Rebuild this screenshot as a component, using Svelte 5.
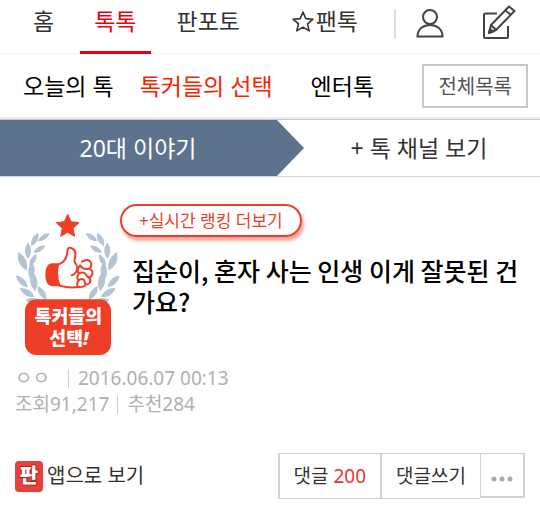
<script lang="ts">
	const tabs = [
		{ label: '홈', active: false, star: false },
		{ label: '톡톡', active: true, star: false },
		{ label: '판포토', active: false, star: false },
		{ label: '팬톡', active: false, star: true },
	];

	const sections = [
		{ label: '오늘의 톡', active: false },
		{ label: '톡커들의 선택', active: true },
		{ label: '엔터톡', active: false },
	];

	const post = {
		title: '집순이, 혼자 사는 인생 이게 잘못된 건가요?',
		author: 'ㅇㅇ',
		date: '2016.06.07 00:13',
		views: '91,217',
		likes: '284',
		comments: 200,
	};

	// each leaf runs from its base to its tip: x1, y1, x2, y2
	const leaves = [
		[116, 152, 147, 131],
		[95, 167, 114, 130],
		[102, 187, 134, 168],
		[84, 205, 84, 159],
		[90, 227, 108, 194],
		[79, 240, 56, 188],
		[93, 268, 96, 218],
		[82, 290, 49, 258],
		[105, 302, 98, 248],
		[102, 320, 61, 296],
		[138, 328, 114, 290],
		[122, 336, 79, 330],
	];

	// control points sit off the midpoint, at right angles to the leaf
	function leafPath([x1, y1, x2, y2]: number[]) {
		const mx = (x1 + x2) / 2;
		const my = (y1 + y2) / 2;
		const dx = (y2 - y1) * 0.34;
		const dy = (x2 - x1) * 0.34;
		return `M${x1} ${y1}Q${mx + dx} ${my - dy} ${x2} ${y2}Q${mx - dx} ${my + dy} ${x1} ${y1}Z`;
	}
</script>

<header class="top">
	<nav class="tabs">
		{#each tabs as tab}
			<a href="#top" class="tab" class:active={tab.active} class:last={tab.star}>
				{#if tab.star}
					<svg width="22" height="22" viewBox="0 0 22 22" fill="none" stroke="#333" stroke-width="1.6" stroke-linejoin="round" aria-hidden="true">
						<path d="M11 1l2.800 6.600 7.200.6-5.500 4.700 1.700 7-6.200-3.800-6.200 3.800 1.700-7L1 8.200l7.200-.6z" />
					</svg>
				{/if}
				{tab.label}
			</a>
		{/each}
	</nav>
	<div class="tools">
		<button aria-label="내 정보">
			<svg width="28" height="30" viewBox="0 0 28 30" fill="none" stroke="#444" stroke-width="2" aria-hidden="true">
				<circle cx="14" cy="8" r="7" />
				<path d="M1.500 27.500C1.500 12 26.500 12 26.500 27.500Z" />
			</svg>
		</button>
		<button aria-label="글쓰기">
			<svg width="34" height="36" viewBox="0 0 34 36" fill="none" stroke="#444" stroke-width="2" stroke-linejoin="round" aria-hidden="true">
				<path d="M15 9.500H3.500Q2 9.500 2 11V32.500Q2 34 3.500 34H24.500Q26 34 26 32.500V22" />
				<path d="M27 2.500L32.500 7 14 26 7 29 9 21Z" />
				<path d="M23.500 6.500L29 11M9 21L14 26" />
				<path d="M7 29l1-4 3 2.500z" fill="#444" />
			</svg>
		</button>
	</div>
</header>

<nav class="sections">
	{#each sections as section}
		<a href="#section" class:active={section.active}>{section.label}</a>
	{/each}
	<button class="all">전체목록</button>
</nav>

<nav class="category">
	<a href="#category" class="current">20대 이야기</a>
	<a href="#channels" class="channels">+ 톡 채널 보기</a>
</nav>

<article class="post">
	<div class="head">
		<svg class="badge" width="108" height="148" viewBox="36 60 324 444" role="img" aria-label="톡커들의 선택!">
			<g fill="#b5c4d3" stroke="#b5c4d3" stroke-width="3" stroke-linejoin="round">
				{#each leaves as leaf}
					<path d={leafPath(leaf)} />
				{/each}
				<g transform="translate(406 0) scale(-1 1)">
					{#each leaves as leaf}
						<path d={leafPath(leaf)} />
					{/each}
				</g>
			</g>
			<path d="M203 73l10 22 24 3-18 17 5 24-21-12-21 12 5-24-18-17 24-3z" fill="#ee3e27" stroke="#ee3e27" stroke-width="3" stroke-linejoin="round" />
			<path d="M190 220h-36q-18 4-18 34 0 32 20 35h34z" fill="#ee3e27" />
			<g fill="#fff" stroke="#ee3e27" stroke-width="6" stroke-linecap="round" stroke-linejoin="round">
				<path d="M178 222Q200 211 202 184Q203 171 214 174Q232 181 225 208L240 228L268 238L260 284L238 290Q210 298 182 288Q168 254 178 222Z" stroke="none" />
				<path d="M178 222Q200 213 202 186Q202 171 213 174Q232 180 224 207Q222 214 226 219Q236 233 228 246Q223 254 215 256" fill="none" />
				<path d="M180 287Q208 295 234 291" fill="none" />
				<path d="M246 215Q266 203 273 219Q276 231 268 236Q281 242 276 255Q273 262 267 263Q275 271 269 279Q265 284 257 283Q252 293 234 291" />
				<path d="M240 226Q248 240 268 236M240 226Q228 244 237 250Q249 244 256 251Q260 258 267 263M237 250Q226 265 237 270Q248 264 253 271Q254 278 257 283M237 270Q228 280 234 291" fill="none" />
			</g>
			<rect x="75" y="328" width="258" height="167" rx="34" fill="#ee3e27" />
			<g class="badge-text" fill="#fff" text-anchor="middle">
				<text x="205" y="399">톡커들의</text>
				<text x="207" y="465">선택<tspan font-style="italic">!</tspan></text>
			</g>
		</svg>
		<div class="heading">
			<a href="#ranking" class="ranking">+실시간 랭킹 더보기</a>
			<h1>{post.title}</h1>
		</div>
	</div>

	<div class="meta">
		<p><span class="author">{post.author}</span><span class="bar">{post.date}</span></p>
		<p><span>조회{post.views}</span><span class="bar">추천{post.likes}</span></p>
	</div>

	<div class="actions">
		<a href="#app" class="app">
			<svg width="28" height="31" viewBox="0 0 28 31" aria-hidden="true">
				<rect width="28" height="31" rx="4" fill="#e8403a" />
				<text x="14" y="22" text-anchor="middle" class="logo">판</text>
			</svg>
			<span>앱으로 보기</span>
		</a>
		<div class="buttons">
			<button>댓글 <span class="count">{post.comments}</span></button>
			<button>댓글쓰기</button>
			<button class="more" aria-label="더보기">
				<svg width="22" height="6" viewBox="0 0 22 6" fill="#aaa" aria-hidden="true">
					<circle cx="3" cy="3" r="2.500" /><circle cx="11" cy="3" r="2.500" /><circle cx="19" cy="3" r="2.500" />
				</svg>
			</button>
		</div>
	</div>
</article>

<style>
	:global(body) {
		margin: 0;
		background: #fff;
		color: #333;
		font-family: 'Noto Sans', 'Noto Sans CJK KR', sans-serif;
		font-size: 23px;
	}

	a {
		color: inherit;
		text-decoration: none;
		white-space: nowrap;
	}

	button {
		margin: 0;
		padding: 0;
		border: none;
		background: transparent;
		color: inherit;
		font: inherit;
		white-space: nowrap;
		cursor: pointer;
	}

	.top {
		display: flex;
		align-items: flex-start;
		height: 53px;
		border-bottom: 1px solid #f5f5f5;
	}

	.tabs {
		flex: 1;
		display: flex;
		gap: 12px;
		padding-left: 19px;
	}

	.tab {
		display: flex;
		align-items: center;
		gap: 2px;
		height: 43px;
		padding: 0 14px 8px;
		border-bottom: 3px solid transparent;
		line-height: 43px;
	}

	.tab.active {
		color: #e60012;
		border-color: #e60012;
	}

	.tab.last {
		margin-left: auto;
	}

	.tools {
		display: flex;
		align-items: center;
		gap: 38px;
		height: 30px;
		margin: 9px 24px 0 22px;
		padding-left: 20px;
		border-left: 2px solid #ddd;
	}

	.tools button {
		display: flex;
	}

	.tools button:last-child {
		padding-bottom: 4px;
	}

	.sections {
		display: flex;
		align-items: center;
		gap: 26px;
		height: 63px;
		padding: 0 12px 0 23px;
		border-bottom: 2px solid #ececec;
		color: #000;
	}

	.sections a {
		padding-bottom: 2px;
	}

	.sections a:last-of-type {
		margin-left: 12px;
	}

	.sections .active {
		color: #f42300;
	}

	.all {
		height: 44px;
		margin-left: auto;
		padding: 0 14px;
		border: 2px solid #c8c8c8;
		color: #555;
		font-size: 20px;
	}

	.category {
		display: flex;
		border-top: 1px solid #c4c8cb;
		border-bottom: 1px solid #d5d5d5;
		line-height: 56px;
		text-align: center;
	}

	.current {
		width: 56.3%;
		box-sizing: border-box;
		padding-right: 28px;
		background: #5d738d;
		color: #fff;
		clip-path: polygon(0 0, calc(100% - 27px) 0, 100% 50%, calc(100% - 27px) 100%, 0 100%);
	}

	.channels {
		flex: 1;
		padding-right: 6px;
	}

	.post {
		padding: 27px 15px 16px;
	}

	.head {
		display: flex;
	}

	.badge {
		flex-shrink: 0;
		margin: 6px 0 0 -3px;
	}

	.badge-text {
		font-size: 55px;
		font-weight: 900;
	}

	.heading {
		flex: 1;
		min-width: 0;
	}

	.ranking {
		display: block;
		width: fit-content;
		padding: 0 17px;
		border: 2px solid #ee3e27;
		border-radius: 17px;
		box-shadow: 2px 4px 3px rgba(238, 62, 39, 0.45);
		color: #ee3e27;
		font-size: 17px;
		line-height: 29px;
	}

	h1 {
		margin: 18px 0 0 12px;
		color: #000;
		font-family: 'Noto Sans CJK KR', sans-serif;
		font-size: 25px;
		font-weight: 500;
		line-height: 31px;
	}

	.meta {
		margin-top: 7px;
		color: #b0b0b0;
		font-size: 19px;
		line-height: 26px;
	}

	.meta p {
		margin: 0;
	}

	.author {
		margin-right: 10px;
	}

	.bar {
		margin-left: 8px;
		padding-left: 10px;
		background: linear-gradient(#ccc, #ccc) left center / 1px 19px no-repeat;
	}

	.actions {
		display: flex;
		align-items: center;
		justify-content: space-between;
		margin-top: 36px;
	}

	.app {
		display: flex;
		align-items: center;
		gap: 4px;
		font-size: 20px;
	}

	.app span {
		padding-bottom: 4px;
	}

	.logo {
		fill: #fff;
		font-size: 20px;
		font-weight: 900;
		paint-order: stroke;
		stroke: #b02a25;
		stroke-width: 2px;
	}

	.buttons {
		display: flex;
		align-items: flex-start;
	}

	.buttons button {
		height: 46px;
		padding: 0 14px 3px;
		border: 1px solid #d2d2d2;
		border-left-width: 2px;
		border-right: none;
		font-size: 19px;
	}

	.buttons .more {
		height: 45px;
		padding: 0 10px;
		border-width: 1px 2px 2px 1px;
		border-right: 2px solid #d2d2d2;
	}

	.count {
		color: #ea3535;
	}
</style>
